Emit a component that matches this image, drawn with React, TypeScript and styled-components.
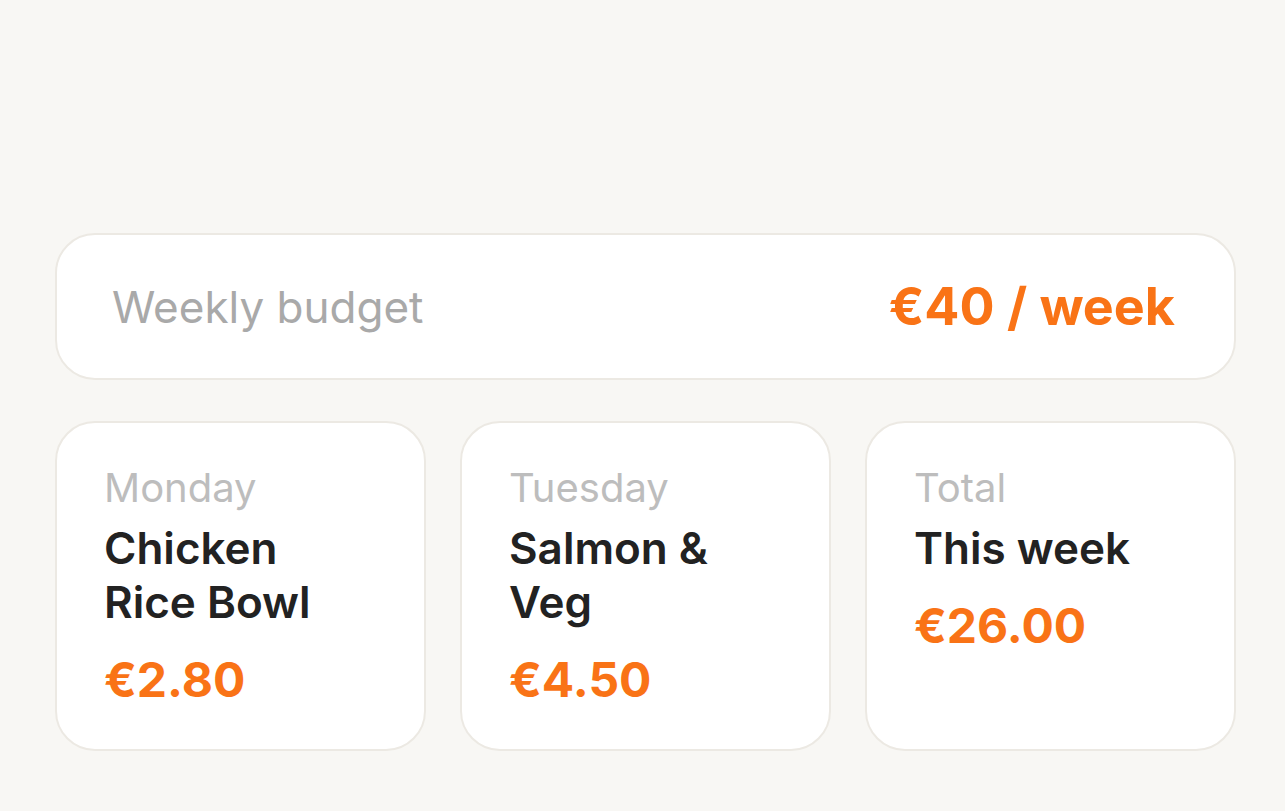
import React, {FC} from 'react';
import styled, {createGlobalStyle} from "styled-components";

const GlobalStyle = createGlobalStyle`
  html, body {
    margin: 0;
    padding: 0;
    background: #f8f7f4;
    font-family: Inter, "Noto Sans", "Liberation Sans", sans-serif;
  }
`;

type Meal = {
    label: string;
    name: string;
    price: string;
};

const meals: Meal[] = [
    {label: "Monday", name: "Chicken Rice Bowl", price: "€2.80"},
    {label: "Tuesday", name: "Salmon & Veg", price: "€4.50"},
    {label: "Total", name: "This week", price: "€26.00"},
];

const App: FC = () => {
    return (
        <>
            <GlobalStyle/>
            <Page>
                <BudgetCard>
                    <BudgetLabel>Weekly budget</BudgetLabel>
                    <BudgetValue>€40 / week</BudgetValue>
                </BudgetCard>

                <CardsGrid>
                    {meals.map(meal => (
                        <MealCard key={meal.label}>
                            <DayLabel>{meal.label}</DayLabel>
                            <MealName>{meal.name}</MealName>
                            <Price>{meal.price}</Price>
                        </MealCard>
                    ))}
                </CardsGrid>
            </Page>
        </>
    );
};

export default App;

const Page = styled.main`
  box-sizing: border-box;
  min-height: 811px;
  padding: 233px 49px 0 55px;
  display: flex;
  flex-direction: column;
  gap: 41px;
`;

const BudgetCard = styled.section`
  box-sizing: border-box;
  height: 147px;
  display: flex;
  align-items: center;
  justify-content: space-between;
  padding: 0 59px 0 55px;
  background: #ffffff;
  border: 2px solid #ece9e3;
  border-radius: 40px;
`;

const BudgetLabel = styled.span`
  font-size: 44px;
  line-height: 52px;
  color: #a9a9a9;
`;

const BudgetValue = styled.span`
  font-size: 52px;
  line-height: 62px;
  font-weight: 700;
  color: #f97316;
`;

const CardsGrid = styled.div`
  display: grid;
  grid-template-columns: repeat(3, 1fr);
  gap: 34px;
`;

const MealCard = styled.article`
  box-sizing: border-box;
  height: 330px;
  padding: 41px 48px 0 47px;
  display: flex;
  flex-direction: column;
  background: #ffffff;
  border: 2px solid #ece9e3;
  border-radius: 40px;
`;

const DayLabel = styled.div`
  font-size: 40px;
  line-height: 48px;
  color: #bdbdbd;
`;

const MealName = styled.div`
  margin-top: 9px;
  font-size: 44px;
  line-height: 54px;
  font-weight: 600;
  color: #222222;
`;

const Price = styled.div`
  margin-top: 22px;
  font-size: 48px;
  line-height: 58px;
  font-weight: 700;
  color: #f97316;
`;
